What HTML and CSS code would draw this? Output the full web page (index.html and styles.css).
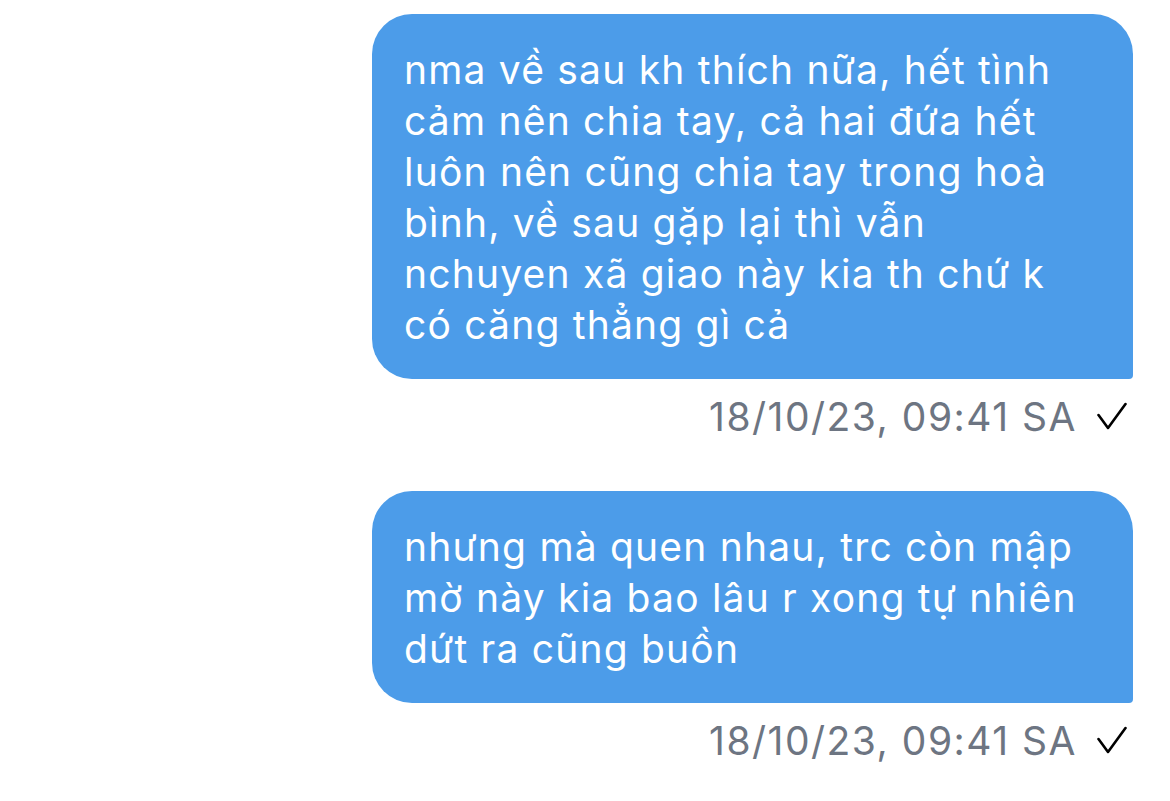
FILE: index.html
```html
<!DOCTYPE html>
<html lang="vi">
<head>
    <meta charset="UTF-8">
    <meta name="viewport" content="width=device-width, initial-scale=1.0">
    <title>Tin nhắn</title>
    <link rel="stylesheet" href="styles.css">
</head>
<body>
    <div class="chat">
        <div class="message">
            <div class="bubble">nma về sau kh thích nữa, hết tình<br>cảm nên chia tay, cả hai đứa hết<br>luôn nên cũng chia tay trong hoà<br>bình, về sau gặp lại thì vẫn<br>nchuyen xã giao này kia th chứ k<br>có căng thẳng gì cả</div>
            <div class="meta">
                <span class="time">18/10/23, 09:41 SA</span>
                <svg class="check" width="30" height="28" viewBox="0 0 30 28"><polyline points="1.5,13 11,26 28.5,2" fill="none" stroke="#000" stroke-width="2.6" stroke-linecap="round" stroke-linejoin="round"/></svg>
            </div>
        </div>
        <div class="message">
            <div class="bubble">nhưng mà quen nhau, trc còn mập<br>mờ này kia bao lâu r xong tự nhiên<br>dứt ra cũng buồn</div>
            <div class="meta">
                <span class="time">18/10/23, 09:41 SA</span>
                <svg class="check" width="30" height="28" viewBox="0 0 30 28"><polyline points="1.5,13 11,26 28.5,2" fill="none" stroke="#000" stroke-width="2.6" stroke-linecap="round" stroke-linejoin="round"/></svg>
            </div>
        </div>
    </div>
</body>
</html>
```

FILE: styles.css
```css
body {
    margin: 0;
    background-color: #fff;
    font-family: Inter, "Noto Sans", sans-serif;
}
.chat {
    padding: 14px 37px 0;
}
.message {
    display: flex;
    flex-direction: column;
    align-items: flex-end;
    margin-bottom: 50px;
}
.bubble {
    box-sizing: border-box;
    width: 761px;
    padding: 30px 32px 29px;
    background-color: #4c9ce9;
    color: #fff;
    font-size: 39px;
    line-height: 51px;
    letter-spacing: 1.2px;
    white-space: nowrap;
    border-radius: 40px 40px 4px 40px;
}
.meta {
    display: flex;
    align-items: center;
    gap: 20px;
    margin-top: 12px;
    padding-right: 6px;
    height: 50px;
}
.time {
    color: #6d7582;
    font-size: 39px;
    letter-spacing: 1.5px;
}
.check {
    display: block;
}
```
